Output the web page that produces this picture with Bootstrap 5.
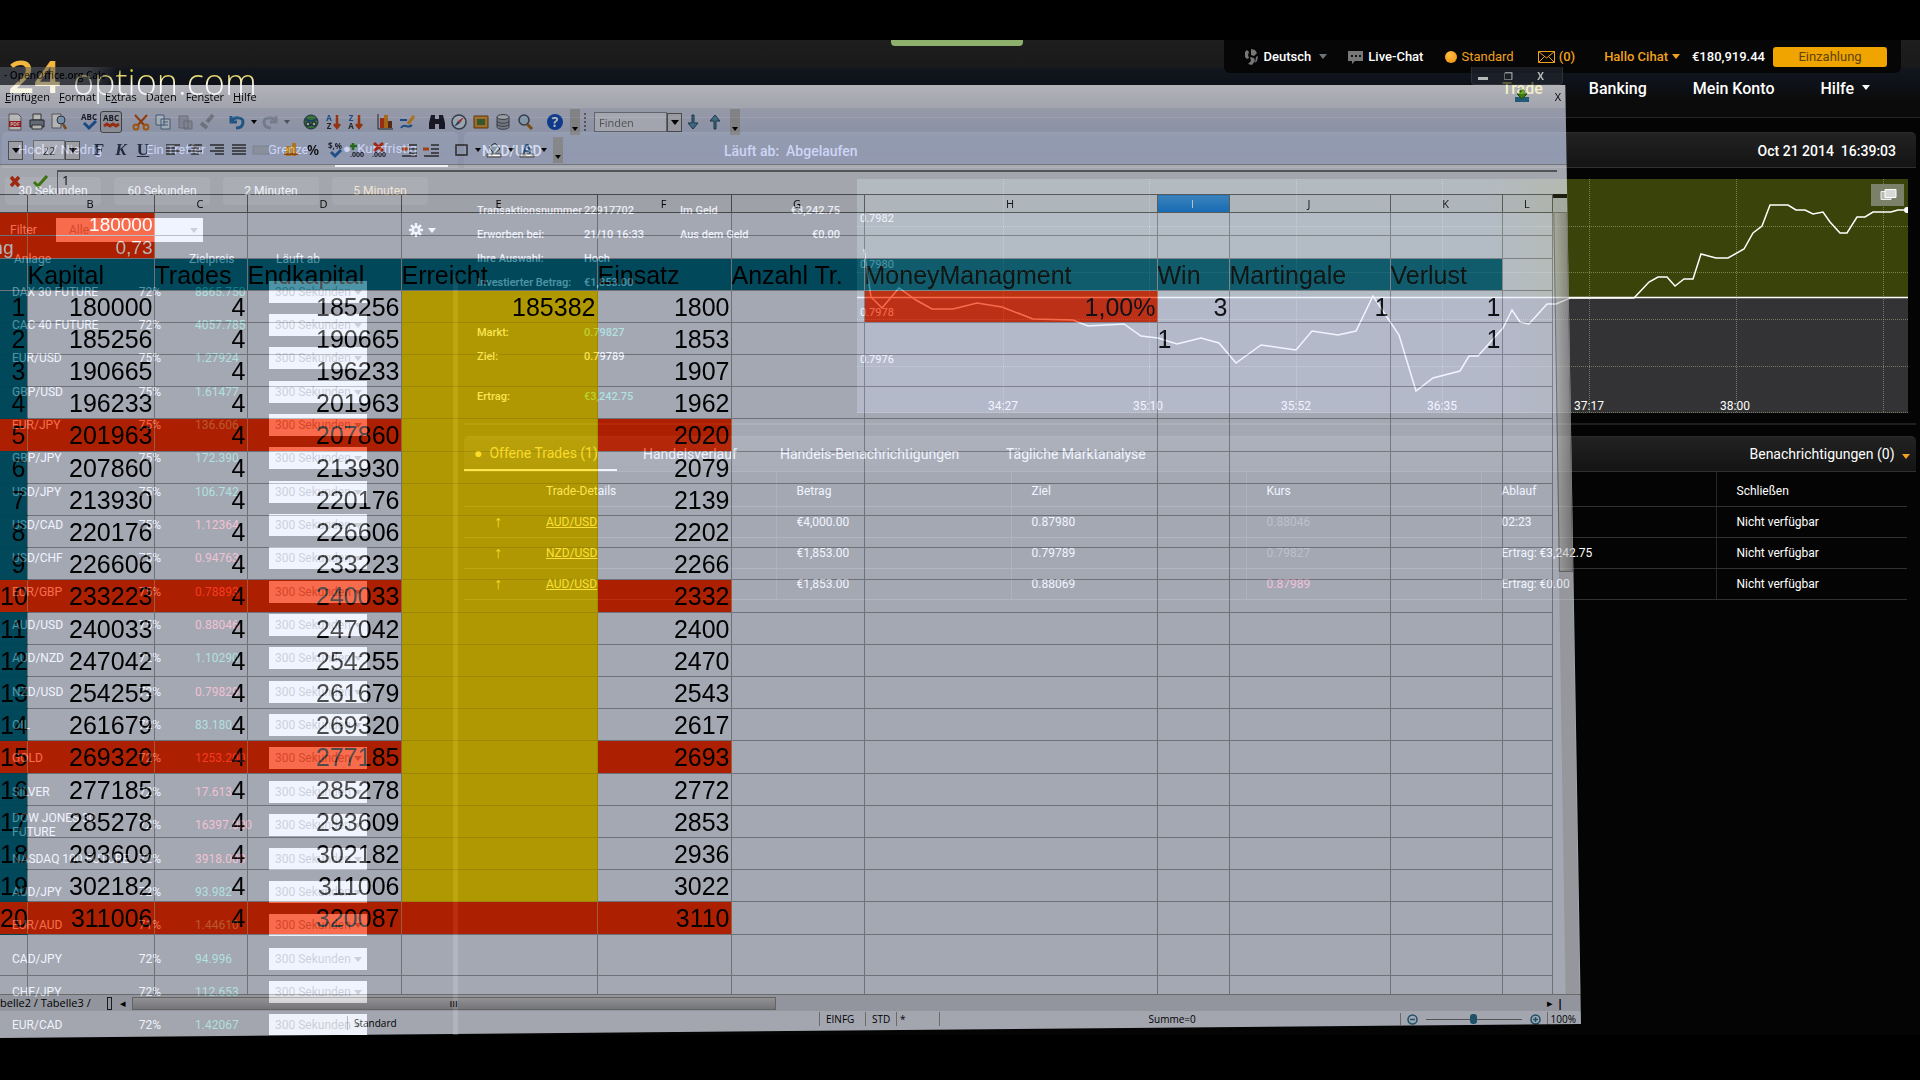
<!DOCTYPE html>
<html lang="de">
<head>
<meta charset="utf-8">
<meta name="viewport" content="width=device-width, initial-scale=1">
<title>24option.com</title>
<link href="https://cdn.jsdelivr.net/npm/bootstrap@5.3.0/dist/css/bootstrap.min.css" rel="stylesheet">
<style>
body{background:#000;color:#fff;font-family:Roboto,"Liberation Sans",sans-serif;font-size:12px;line-height:16px;overflow:hidden}
a{color:inherit;text-decoration:none}
.stage{height:100vh;padding-top:40px;padding-bottom:45px}
.platform{background:#040404}
.site-head{height:78px;background:linear-gradient(#1e1e1e,#1a1a1b 26px,#11151d 30px,#0e1118 44px,#0b0b0b 60px,#0a0a0a);border-bottom:1px solid #262626}
.green-tab{left:891px;top:0;width:132px;height:6px;background:#8db16c;border-radius:0 0 4px 4px}
.logo{font-family:"Open Sans","Noto Sans",sans-serif;padding-left:8px;line-height:56px}
.logo-num{font-size:46px;font-weight:600;background:linear-gradient(#f3b63e 40%,#fff3b0 66%);-webkit-background-clip:text;background-clip:text;color:transparent;width:65px;padding-bottom:8px}
.logo-name{font-size:36px;font-weight:300;background:linear-gradient(#d9c93c 40%,#fff 60%);-webkit-background-clip:text;background-clip:text;color:transparent;padding-top:6px}
.user-bar{height:33px;background:#060607;border-radius:0 0 6px 6px;margin-right:19px;padding:0 14px 0 18px;font-weight:500;font-size:13px}
.orange{color:#f0a11e}
.dot-ball{width:12px;height:12px;border-radius:50%;background:radial-gradient(circle at 40% 30%,#ffc040,#f08a10);margin-left:22px}
.pay-btn{height:20px;width:114px;line-height:18px;background:#f0a400;border:0;border-radius:3px;color:#5d4508;font-size:13px;padding:0}
.caret{width:0;height:0;border:4px solid transparent;border-top:5px solid currentColor;border-bottom:0;display:inline-block}
.main-nav{font-size:16px;font-weight:500;line-height:20px;padding:6px 50px 0 0;gap:46px}
.left-col{width:456px;flex:none;margin-left:2px}
.panel-head{height:36px;background:linear-gradient(#222,#141414);border-bottom:1px solid #303030;border-top:1px solid #2c2c2c;border-radius:5px 5px 0 0}
.ptab{font-size:13px;color:#dcdcff}
.time-btn{width:96px;height:28px;border:0;background:#1b1b1b;color:#fff;border-radius:4px;font-size:12px;padding:0}
.sel{appearance:none;border:0;border-radius:0;background-color:#fff;color:#888;font-size:12px;line-height:16px;padding:0 6px}
.sel-wrap{position:relative;display:inline-flex}
.sel-wrap::after{content:"";position:absolute;right:5px;top:50%;margin-top:-2px;border:4px solid transparent;border-top:5px solid #888;border-bottom:0;pointer-events:none}
.assets{min-height:0;overflow:hidden;padding-top:4px}
.asset-list{margin-bottom:-7px;border-right:5px solid #333}
.asset-row{flex:1 1 0;min-height:0;padding-left:10px;line-height:14px}
.a-name{width:108px}.a-pct{width:41px;text-align:right}.a-price{width:74px;margin-left:34px}
.up{color:#30c09a}.down{color:#ff5a70}
.info{width:400px;font-size:11px;font-weight:500;padding:24px 0 0 13px}
.info-line{height:24px;line-height:16px}
.gridl{stroke:#b8bf90;stroke-opacity:.5;stroke-dasharray:1 1}
.trades-t{color:#fff;width:100%;table-layout:fixed}
.trades-t th{font-weight:400;height:34px;vertical-align:middle;padding:5px 0 0 20px;border-bottom:1px solid #303030}
.trades-t td{height:31px;padding:0 0 0 20px;border-bottom:1px solid #303030}
.trades-t tr>:nth-child(n+3){border-left:1px solid #262626}
.trades-t a{text-decoration:underline;color:#ffeeb0}
.tabx{font-size:14px}

/* translucent spreadsheet window */
.calc{position:absolute;left:0;top:67px;bottom:42px;width:1581px;max-width:82.4%;opacity:.7;color:#000;font-family:"Open Sans","Noto Sans",sans-serif;font-size:10px;clip-path:polygon(0 0,calc(100% - 16px) 0,100% calc(100% - 14px),0 100%)}
.calc-title{height:18px;padding-right:18px}
.title-glow{padding:0 12px 0 4px;font-weight:600;background:linear-gradient(90deg,#5c5e64cc 75%,transparent)}
.win-btns{border:1px solid #3b3f48;border-top:0;border-radius:0 0 4px 4px;width:92px;height:18px;background:#22262f;padding:0 18px 0 6px}
.win-btns button,.tb{border:0;background:none;padding:0;color:inherit;line-height:14px}
.calc-menu{height:23px;background:linear-gradient(#fbfbff,#e4e7f6);padding:4px 16px 0 5px;gap:9px;font-size:11px}
.calc-tools{background:linear-gradient(#d3d7ea,#c4d0ef 30px,#c8d3f3);border-bottom:1px solid #a09fa8}
.tool-line{height:28px}
.tb{width:22px;height:22px;display:inline-flex;align-items:center;justify-content:center;flex:none}
.tb svg{width:18px;height:18px}
.tb-c{width:11px;flex:none;display:inline-flex;justify-content:center}
.tb-c .caret{border-width:4px 3px 0}
.sp{width:8px;flex:none}
.pressed{border:1px solid #555;border-radius:3px;background:#c4c8d6}
.endcap{width:10px;height:26px;background:#b7b7ba;display:flex;align-items:flex-end;justify-content:center;padding-bottom:4px;flex:none}
.boxed{border:1px solid #8a8d98;background:#e8ebf8;color:#333;font-size:11px;height:20px;border-radius:0;padding:0 4px}
.boxbtn{width:15px;height:19px;border:1px solid #666;background:#d7d9e2;display:inline-flex;align-items:center;justify-content:center;padding:0}
.letter{font-family:"Liberation Serif",serif;font-size:17px;font-weight:700;color:#26334f}
.formula{height:29px;background:#eaedf8;padding-top:5px}
.formula input{border:0;border-top:2px solid #77777c;border-left:1px solid #777;background:transparent;height:24px;font-size:13px;padding:0 4px 6px;margin-left:5px}
.sheet-zone{background:#eaefff;min-height:0;overflow:hidden}
.cells{table-layout:fixed;width:1553px;border-collapse:collapse;font-family:"Liberation Sans",Arial,sans-serif;font-size:25px;line-height:30px;flex:none}
.cells th,.cells td{border-right:1px solid #9da1ab;border-bottom:1px solid #9da1ab;padding:0 1px 0 0;text-align:right;font-weight:400;white-space:nowrap;overflow:hidden;height:32px}
.cells thead th{height:18px;font:11px/15px "Open Sans",sans-serif;text-align:center;background:#e2e5f1;border-top:1px solid #666;border-color:#666}
.cells thead th.picked{background:linear-gradient(#3d9df0,#0a7ce6);color:#fff}
.cells .small-row>*{height:23px;font-size:19px;line-height:21px;color:#fff}
.cells .title-row>*{background:#006680;text-align:left;padding:0}
.cells .title-row>:last-child{background:none}
.cells .red{background:#f52c00;border-right-color:#e0825a}
.cells .yel{background:#fad900;border-color:#e0c000}
.cells .num{background:#006680;border-bottom-color:#006078}
.cells .num.red{background:#f52c00}
.cells .redrow>*{height:33px}
.cells .tail>*{height:41px}
.cells .cutoff{padding-right:13px;direction:rtl}
.vscroll{width:14px;background:#d4d7e0;transform:skewX(.9deg);transform-origin:top;flex:none;border-top:4px solid #111;padding-top:14px}
.vthumb{height:46%;border:1px solid #888;background:linear-gradient(90deg,#d5d5d5,#a9a9ac);width:100%}
.tabs-line{height:17px;background:#d0d4e0;border-top:1px solid #999;font-size:11px;line-height:14px}
.hthumb{width:644px;height:13px;border:1px solid #8d8d8d;background:linear-gradient(#d0d0d4,#a5a6aa)}
.status{height:27px;background:#e8ecfa;padding:0 5px 11px 0;font-size:10px}
.status .seg{border-left:1px solid #999;padding:0 6px;line-height:14px}
.status .low{margin:8px 0 0 347px;width:472px}
.zoomer{width:96px;height:12px;appearance:none;background:linear-gradient(#777,#777) center/100% 1px no-repeat}
.zoomer::-webkit-slider-thumb{appearance:none;width:7px;height:10px;border-radius:3px;background:#2b7394}
</style>
<script src="https://cdn.jsdelivr.net/npm/bootstrap@5.3.0/dist/js/bootstrap.bundle.min.js"></script>
</head>
<body>
<div class="stage position-relative">
<div class="platform d-flex flex-column h-100">
  <header class="site-head d-flex justify-content-between position-relative flex-shrink-0">
    <div class="green-tab position-absolute"></div>
    <a href="#" class="logo d-flex align-items-center"><span class="logo-num">24</span><span class="logo-name">option.com</span></a>
    <div class="d-flex flex-column align-items-end">
      <div class="user-bar d-flex align-items-center">
        <svg width="18" height="18" viewBox="0 0 18 18" fill="#777"><path d="M3 4l2-2 2 2-1 3 1 3-2 1-2-2zM9 1l4 1 2 3-3 3-3-1zM8 9l4 1 1 3-3 4-4-1 3-3zM14 9l2-1-1 5-2 2z"/></svg>
        <a href="#" class="ms-1">Deutsch</a><span class="caret text-secondary ms-2"></span>
        <svg style="margin-left:20px" width="17" height="16" viewBox="0 0 17 16"><path fill="#777" d="M1 2h15v10H8l-3 3v-3H1z"/><path fill="#111" d="M4 6h2v2H4zM8 6h2v2H8zM12 6h2v2h-2z"/></svg>
        <a href="#" class="ms-1">Live-Chat</a>
        <span class="dot-ball"></span><span class="orange ms-1 fw-normal">Standard</span>
        <svg class="ms-4" width="17" height="12" viewBox="0 0 17 12" fill="none" stroke="#f0a11e"><path d="M.5.5h16v11H.5zL8.500 7l8-6.500M.5 11.500l6-6M16.500 11.500l-6-6"/></svg>
        <a href="#" class="orange ms-1">(0)</a>
        <a href="#" class="orange" style="margin-left:29px">Hallo Cihat</a><span class="caret orange ms-1"></span>
        <span style="margin-left:12px">€180,919.44</span>
        <button class="pay-btn ms-2">Einzahlung</button>
      </div>
      <nav class="main-nav d-flex">
        <a href="#" style="color:#e7dc50">Trade</a><a href="#">Banking</a><a href="#">Mein Konto</a><a href="#">Hilfe <span class="caret ms-1 mb-1"></span></a>
      </nav>
    </div>
  </header>
  <div class="d-flex flex-grow-1" style="min-height:0;padding-top:14px">
    <aside class="left-col d-flex flex-column">
      <nav class="panel-head d-flex align-items-center ptab ps-3 flex-shrink-0">
        <a href="#" style="width:128px">Hoch / Niedrig</a><a href="#" style="width:122px">Ein Treffer</a><a href="#" style="width:67px">Grenze</a>
        <a href="#" class="d-flex align-items-center h-100 ps-2" style="border-bottom:2px solid #fff;width:113px">●&nbsp; Kurzfristig</a>
      </nav>
      <div class="d-flex flex-shrink-0" style="gap:13px;margin:9px 0 0 3px">
        <button class="time-btn">30 Sekunden</button><button class="time-btn">60 Sekunden</button><button class="time-btn">2 Minuten</button><button class="time-btn" style="color:#ffd27a">5 Minuten</button>
      </div>
      <div class="d-flex align-items-center flex-shrink-0" style="margin:13px 0 0 8px">
        <label for="flt" style="width:46px">Filter</label>
        <span class="sel-wrap"><select id="flt" class="sel" style="width:147px;height:24px;padding-left:13px"><option>Alle</option></select></span>
        <svg style="margin-left:205px" width="16" height="16" viewBox="0 0 17 17"><g stroke="#fff" stroke-width="2.600"><path d="M8.500 1v15M1 8.500h15M3.200 3.200l10.600 10.600M13.800 3.200L3.200 13.800"/></g><circle cx="8.500" cy="8.500" r="4.500" fill="#fff"/><circle cx="8.500" cy="8.500" r="2" fill="#222"/></svg><span class="caret ms-1"></span>
      </div>
      <div class="d-flex flex-shrink-0" style="padding:9px 0 0 12px;height:29px"><span style="width:175px">Anlage</span><span style="width:87px">Zielpreis</span><span>Läuft ab</span></div>
      <div class="assets flex-grow-1 d-flex flex-column"><div class="asset-list flex-grow-1 d-flex flex-column" id="assets"></div></div>
    </aside>
    <main class="flex-grow-1 d-flex flex-column pe-1" style="margin-left:6px;min-width:0">
      <div class="panel-head d-flex align-items-center flex-shrink-0" style="font-size:14px;font-weight:500;padding:2px 20px 0 18px">
        <span style="width:242px">NZD/USD</span><span style="color:#dcdcff">Läuft ab: &nbsp;Abgelaufen</span><span class="ms-auto">Oct 21 2014 &nbsp;16:39:03</span>
      </div>
      <section class="d-flex flex-shrink-0" style="border-bottom:2px solid #1e1e1e;padding:11px 8px 10px 0;height:257px">
        <div class="info flex-shrink-0" id="info"></div>
        <svg class="flex-grow-1" style="min-width:0;margin-left:-7px" viewBox="857 179 1051 234" preserveAspectRatio="xMaxYMin slice" font-family="Roboto" font-size="11" fill="#fff">
          <defs><linearGradient id="sky"><stop offset=".6" stop-color="#37463f"/><stop offset=".68" stop-color="#3a430a"/></linearGradient><linearGradient id="floor"><stop offset=".6" stop-color="#3a3e52"/><stop offset=".68" stop-color="#333335"/></linearGradient></defs>
          <path fill="url(#sky)" d="M857 179h1051v118H857z"/><path fill="url(#floor)" d="M857 297h1051v116H857z"/>
          <path class="gridl" fill="none" d="M857 226.500h1051M857 272.500h1051M857 319.500h1051M857 366.500h1051M857 412.500h1051M1003.500 179v234M1149.500 179v234M1296.500 179v234M1442.500 179v234M1589.500 179v234M1736.500 179v234M1883.500 179v234"/>
          <path stroke="#fff" stroke-width="1.500" d="M857 297.500h1051"/>
          <path fill="none" stroke="#fff" stroke-width="1.500" d="M864 249L871 297L882 308L899 288L916 300L932 309H953L977 303L1002 307L1033 319L1073 320L1088 326L1124 324L1141 336L1158 338L1177 344L1201 338L1219 343L1236 363L1261 345L1296 350L1312 331L1338 335L1356 331L1373 296L1399 335L1416 391L1433 378L1460 371L1469 356H1478L1494 338L1503 328L1512 310L1520 322L1529 324L1547 304H1556L1570 298H1634L1649 282L1658 277H1667L1675 286L1684 279H1693L1701 254L1716 258H1728L1744 249L1753 233L1762 226L1770 205H1788L1796 210H1805L1813 214L1823 212L1830 222L1840 233H1847L1857 217H1865L1873 212H1891L1898 210H1908"/>
          <circle cx="1907" cy="210" r="3"/>
          <text x="860" y="222">0.7982</text><text x="860" y="268">0.7980</text><text x="860" y="316">0.7978</text><text x="860" y="363">0.7976</text>
          <g text-anchor="middle" font-size="12"><text x="1003" y="410">34:27</text><text x="1148" y="410">35:10</text><text x="1296" y="410">35:52</text><text x="1442" y="410">36:35</text><text x="1589" y="410">37:17</text><text x="1735" y="410">38:00</text></g>
          <path fill="#7a8168" d="M1871 184h33v22h-33z"/><path fill="#b9b9b4" stroke="#eee" d="M1881 191.500h10v8h-10z"/><path fill="#d8d8d6" stroke="#fff" d="M1885 189.500h11v8h-11z"/>
        </svg>
      </section>
      <nav class="panel-head d-flex align-items-center tabx flex-shrink-0" style="margin-top:11px;padding-right:6px">
        <a href="#" class="d-flex align-items-center h-100" style="width:153px;padding-left:10px;color:#ffe28a;border-bottom:2px solid #fff">●&nbsp; Offene Trades (1)</a>
        <a href="#" style="margin-left:26px;width:137px">Handelsverlauf</a><a href="#" style="width:226px">Handels-Benachrichtigungen</a><a href="#">Tägliche Marktanalyse</a>
        <a href="#" class="ms-auto">Benachrichtigungen (0) <span class="caret orange ms-1"></span></a>
      </nav>
      <div style="padding-right:9px"><table class="trades-t">
        <colgroup><col style="width:62px"><col style="width:250px"><col style="width:235px"><col style="width:235px"><col style="width:235px"><col style="width:235px"><col></colgroup>
        <thead><tr><th></th><th>Trade-Details</th><th>Betrag</th><th>Ziel</th><th>Kurs</th><th>Ablauf</th><th>Schließen</th></tr></thead>
        <tbody id="trades"></tbody>
      </table></div>
    </main>
  </div>
</div>

<div class="calc d-flex flex-column">
  <div class="calc-title d-flex justify-content-between flex-shrink-0"><span class="title-glow">- OpenOffice.org Calc</span>
    <div class="win-btns d-flex justify-content-between align-items-center text-white"><button>▬</button><button>❐</button><button class="fw-bold ms-2">X</button></div></div>
  <div class="calc-menu d-flex flex-shrink-0"><a href="#"><u>E</u>infügen</a><a href="#"><u>F</u>ormat</a><a href="#">E<u>x</u>tras</a><a href="#">Da<u>t</u>en</a><a href="#">Fen<u>s</u>ter</a><a href="#"><u>H</u>ilfe</a>
    <svg class="ms-auto" width="16" height="14" viewBox="0 0 16 14"><path fill="#2d7ba6" d="M1 8h14v5H1z"/><path fill="#4fae18" stroke="#246b00" d="M6 1h4v4h3l-5 5-5-5h3z"/></svg><span class="ms-3 me-1">X</span></div>
  <div class="calc-tools flex-shrink-0">
    <div class="tool-line d-flex align-items-center ps-1" id="tools1"></div>
    <div class="tool-line d-flex align-items-center" id="tools2"></div>
  </div>
  <div class="formula d-flex flex-shrink-0">
    <button class="tb ms-1" aria-label="Abbrechen"><svg viewBox="0 0 18 18"><path stroke="#d8300c" stroke-width="3.500" d="M5 5l8 9M13 5l-8 9"/></svg></button>
    <button class="tb ms-1" aria-label="Übernehmen"><svg viewBox="0 0 18 18"><path fill="none" stroke="#4d9a10" stroke-width="3" d="M2 10l4 4L15 4"/></svg></button>
    <input class="flex-grow-1 me-4" value="1" aria-label="Eingabezeile">
  </div>
  <div class="sheet-zone d-flex flex-grow-1">
    <table class="cells"><colgroup><col style="width:27px"><col style="width:127px"><col style="width:93px"><col style="width:154px"><col style="width:196px"><col style="width:134px"><col style="width:133px"><col style="width:293px"><col style="width:72px"><col style="width:161px"><col style="width:112px"><col></colgroup>
      <thead><tr><th></th><th>B</th><th>C</th><th>D</th><th>E</th><th>F</th><th>G</th><th>H</th><th class="picked">I</th><th>J</th><th>K</th><th>L</th></tr></thead>
      <tbody id="cells"></tbody></table>
    <div class="vscroll"><div class="vthumb"></div></div>
  </div>
  <div class="tabs-line d-flex align-items-center flex-shrink-0"><a href="#">belle2</a>&nbsp;/&nbsp;<a href="#">Tabelle3</a>&nbsp;/<span class="ms-3 border border-dark" style="width:5px;height:13px"></span><span style="margin:0 6px 0 8px">◂</span><div class="hthumb text-center" style="line-height:9px">ııı</div><span class="ms-auto" style="padding-right:18px">▸<b class="ms-1">|</b></span></div>
  <div class="status d-flex align-items-center flex-shrink-0">
    <span class="seg low">Standard</span><span class="seg" style="width:46px">EINFG</span><span class="seg" style="width:31px">STD</span><span class="seg" style="width:14px;padding-left:3px">*</span><span class="seg"></span><span class="seg ms-3">&nbsp;</span>
    <span style="margin-left:194px">Summe=0</span>
    <span class="seg ms-auto d-flex align-items-center gap-2"><svg width="11" height="11" viewBox="0 0 11 11" fill="none" stroke="#2b7394" stroke-width="1.500"><circle cx="5.500" cy="5.500" r="4.500"/><path d="M3 5.500h5"/></svg><input type="range" class="zoomer" aria-label="Maßstab"><svg width="11" height="11" viewBox="0 0 11 11" fill="none" stroke="#2b7394" stroke-width="1.500"><circle cx="5.500" cy="5.500" r="4.500"/><path d="M3 5.500h5M5.500 3v5"/></svg></span><span class="seg" style="padding:0 0 0 3px">100%</span>
  </div>
</div>
</div>
<script>
const el = id => document.getElementById(id);

// asset list
const assets = [['DAX 30 FUTURE',72,'8865.750','up'],['CAC 40 FUTURE',72,'4057.785','up'],['EUR/USD',75,'1.27924','up'],['GBP/USD',75,'1.61477','up'],['EUR/JPY',75,'136.606','up'],['GBP/JPY',75,'172.390','up'],['USD/JPY',75,'106.742','up'],['USD/CAD',75,'1.12364','down'],['USD/CHF',75,'0.94763','down'],['EUR/GBP',75,'0.78893','down'],['AUD/USD',75,'0.88046','down'],['AUD/NZD',72,'1.10290','up'],['NZD/USD',72,'0.79829','down'],['OIL',72,'83.180','up'],['GOLD',72,'1253.200','down'],['SILVER',72,'17.613','down'],['DOW JONES 30 FUTURE',72,'16397.000','down'],['NASDAQ 100 FUTURE',72,'3918.000','down'],['AUD/JPY',72,'93.982','up'],['EUR/AUD',71,'1.44610','up'],['CAD/JPY',72,'94.996','up'],['CHF/JPY',72,'112.653','up'],['EUR/CAD',72,'1.42067','up']];
el('assets').innerHTML = assets.map(a => `<div class="asset-row d-flex align-items-center"><span class="a-name ${a[0].startsWith('NAS') ? 'text-nowrap' : ''}">${a[0]}</span><span class="a-pct">${a[1]}%</span><span class="a-price ${a[3]}">${a[2]}</span><span class="sel-wrap"><select class="sel" style="width:98px;height:22px" aria-label="Laufzeit ${a[0]}"><option>300 Sekunden</option></select></span></div>`).join('');

// trade information
const info = [['Transaktionsnummer','22917702','Im Geld','€3,242.75'],['Erworben bei:','21/10 16:33','Aus dem Geld','€0.00'],['Ihre Auswahl:','Hoch'],['Investierter Betrag:','€1,853.00'],[''],['Markt:','<span class="up">0.79827</span>'],['Ziel:','0.79789'],['',''],['Ertrag:','<span class="up">€3,242.75</span>']];
el('info').innerHTML = info.map((r, i) => `<div class="info-line d-flex" style="height:${i == 4 ? 26 : i == 7 ? 16 : 24}px"><span style="width:107px">${r[0]}</span><span style="width:96px">${r[1] || ''}</span><span style="width:90px">${r[2] || ''}</span><span class="text-end" style="width:70px">${r[3] || ''}</span></div>`).join('');

// open trades
el('trades').innerHTML = [['AUD/USD','€4,000.00','0.87980','0.88046','02:23','#555'],['NZD/USD','€1,853.00','0.79789','0.79827','Ertrag: €3,242.75','#555'],['AUD/USD','€1,853.00','0.88069','0.87989','Ertrag: €0.00','#ff5a90']].map(t => `<tr><td style="font-size:16px;padding-left:30px;color:#ffe28a">↑</td><td><a href="#">${t[0]}</a></td><td>${t[1]}</td><td>${t[2]}</td><td style="color:${t[5]}">${t[3]}</td><td class="text-nowrap">${t[4]}</td><td>Nicht verfügbar</td></tr>`).join('');

// spreadsheet cells
const kap = [180000,185256,190665,196233,201963,207860,213930,220176,226606,233223,240033,247042,254255,261679,269320,277185,285278,293609,302182,311006,320087];
const bet = [1800,1853,1907,1962,2020,2079,2139,2202,2266,2332,2400,2470,2543,2617,2693,2772,2853,2936,3022,3110];
const blank = n => '<td></td>'.repeat(n);
let rows = `<tr class="small-row"><td class="red"></td><td class="red">180000</td>${blank(10)}</tr><tr class="small-row"><td class="red cutoff">ng</td><td class="red">0,73</td>${blank(10)}</tr>`;
rows += '<tr class="title-row">' + ['','Kapital','Trades','Endkapital','Erreicht','Einsatz','Anzahl Tr.','MoneyManagment','Win','Martingale','Verlust',''].map(h => `<th>${h}</th>`).join('') + '</tr>';
bet.forEach((b, i) => {
  const n = i + 1, r = n % 5 == 0 ? 'red' : '';
  const tail = n == 1 ? '<td class="red">1,00%</td><td>3</td><td>1</td><td>1</td><td></td>' : n == 2 ? '<td></td><td class="text-start">1</td><td></td><td>1</td><td></td>' : blank(5);
  rows += `<tr class="${r ? 'redrow' : ''}"><th class="num ${r}">${n}</th><td class="${r}">${kap[i]}</td><td class="${r}">4</td><td class="${r}">${kap[n]}</td><td class="${n == 20 ? 'red' : 'yel'}">${n == 1 ? '185382' : ''}</td><td class="${r}">${b}</td><td></td>${tail}</tr>`;
});
rows += `<tr class="tail">${blank(12)}</tr><tr>${blank(12)}</tr>`;
el('cells').innerHTML = rows;

// toolbar icons, 18 x 18
const S = (body, name, cls = '') => `<button class="tb ${cls}" aria-label="${name}"><svg viewBox="0 0 18 18" fill="none">${body}</svg></button>`;
const G = '<span class="sp"></span>', C = '<span class="tb-c"><span class="caret"></span></span>';
const T = (s, y, c, z = 8) => `<text x="9" y="${y}" font-size="${z}" font-weight="700" text-anchor="middle" fill="${c}">${s}</text>`;
const lines = (a, b) => [4, 7, 10, 13].map((y, i) => `<path stroke="#333" stroke-width="1.500" d="M${i % 2 ? a : 2} ${y}H${i % 2 ? b : 16}"/>`).join('');
el('tools1').innerHTML = [
 S('<path fill="#fff" stroke="#777" d="M3 1h9l3 3v13H3z"/><path fill="#d22" d="M3 8h12v6H3z"/>' + T('PDF', 13, '#fff', 5), 'PDF'),
 S('<path fill="#fff" stroke="#444" d="M5 1h8v6H5z"/><path fill="#8a97a8" stroke="#333" d="M2 7h14v7H2z"/><path fill="#fff" stroke="#444" d="M4 12h10v4H4z"/>', 'Drucken'),
 S('<path fill="#fff" stroke="#777" d="M2 1h9v14H2z"/><circle cx="11" cy="7" r="4" fill="#a8cfee" stroke="#345"/><path stroke="#a86a20" stroke-width="2.500" d="M13 11l3 5"/>', 'Vorschau'), G,
 S(T('ABC', 7, '#223', 8) + '<path stroke="#2468b8" stroke-width="3" d="M4 10l5 5 7-7"/>', 'Rechtschreibung'),
 S(T('ABC', 8, '#223', 8) + '<path stroke="#d8401a" stroke-width="3" d="M2 13l3-2 3 2 3-2 3 2 3-2"/>', 'AutoPrüfung', 'pressed'), G,
 S('<path stroke="#c35010" stroke-width="2" d="M3 2l10 11M15 2L5 13"/><circle cx="4" cy="14" r="2.500" stroke="#e07810" stroke-width="2"/><circle cx="14" cy="14" r="2.500" stroke="#e07810" stroke-width="2"/>', 'Ausschneiden'),
 S('<path fill="#e8f2fc" stroke="#5c7fa8" d="M2 2h8v10H2zM7 6h9v10H7zM9 9h5M9 12h5"/>', 'Kopieren'),
 S('<path fill="#b4bccc" stroke="#9098a8" d="M3 3h9v12H3zM8 8h8v8H8z"/>', 'Einfügen'),
 S('<path stroke="#9aa2b2" stroke-width="4" d="M15 2L9 9M3 10l6 5"/>', 'Pinsel'), G,
 S('<path stroke="#2d78b8" stroke-width="3" d="M3 3v6h6M3 9c3-6 12-5 12 0s-4 6-7 6"/>', 'Rückgängig'), C,
 S('<path stroke="#a4b0c6" stroke-width="3" d="M15 3v6H9M15 9C12 3 3 4 3 9s4 6 7 6"/>', 'Wiederherstellen'), C.replace('caret"', 'caret text-secondary"'), G,
 S('<circle cx="9" cy="9" r="7" fill="#4d9a50" stroke="#245"/><path stroke="#245a88" stroke-width="2" d="M3 6q6 4 12 0M5 12h8"/><circle cx="6" cy="11" r="2" stroke="#222" fill="#cde"/><circle cx="12" cy="11" r="2" stroke="#222" fill="#cde"/>', 'Hyperlink'),
 S('<g transform="translate(-4 0)">' + T('A', 8, '#2468b8') + T('Z', 16, '#333') + '</g><path stroke="#d04a18" stroke-width="2.500" d="M13 2v12M10 11l3 4 3-4"/>', 'Aufsteigend'),
 S('<g transform="translate(-4 0)">' + T('Z', 8, '#2468b8') + T('A', 16, '#333') + '</g><path stroke="#d04a18" stroke-width="2.500" d="M13 2v12M10 11l3 4 3-4"/>', 'Absteigend'), G,
 S('<path fill="#d8401a" d="M4 5h4v10H4z"/><path fill="#e89020" d="M8 2h4v13H8z"/><path fill="#7a3a20" d="M12 8h4v7h-4z"/><path stroke="#333" d="M2 1v15h15"/>', 'Diagramm'),
 S('<path stroke="#e8a030" stroke-width="3" d="M16 3l-6 8"/><path stroke="#2468b8" stroke-width="2" d="M2 7h7M3 15c4-6 6 2 11-3"/>', 'Zeichnen'), G,
 S('<path fill="#223" d="M3 2h4v4h4V2h4l2 8v6h-6v-5H7v5H1v-6z"/>', 'Suchen'),
 S('<circle cx="9" cy="9" r="7" fill="#dce8f8" stroke="#456" stroke-width="1.500"/><path fill="#d33" d="M14 4l-4 6-2-2z"/><path fill="#258" d="M4 14l4-6 2 2z"/>', 'Navigator'),
 S('<path fill="#e09a38" stroke="#804a10" d="M2 3h14v12H2z"/><path fill="#4d7a40" d="M5 6h8v6H5z"/>', 'Gallery'),
 S('<path fill="#a8adb8" stroke="#556" d="M3 4v10c0 3 12 3 12 0V4"/><ellipse cx="9" cy="4" rx="6" ry="2.500" fill="#d4d8e0" stroke="#556"/><path stroke="#556" d="M3 8c0 3 12 3 12 0M3 11c0 3 12 3 12 0"/>', 'Datenquellen'),
 S('<circle cx="8" cy="7" r="5" fill="#b8d4ec" stroke="#456" stroke-width="1.500"/><path stroke="#a86a20" stroke-width="3" d="M11 11l5 5"/>', 'Zoom'), G,
 S('<circle cx="9" cy="9" r="8" fill="#1452c8"/>' + T('?', 14, '#fff', 14), 'Hilfe'),
 '<span class="endcap ms-1"><span class="caret" style="border-width:4px 3px 0"></span></span><span class="ms-1 me-2" style="border-left:2px dotted #777;height:18px"></span>',
 '<input class="boxed" style="width:73px" placeholder="Finden" aria-label="Finden"><button class="boxbtn" aria-label="Suchliste"><span class="caret"></span></button>',
 S('<path fill="#5a96b8" stroke="#234a68" d="M8 2h2v8h4l-5 6-5-6h4z"/>', 'Weitersuchen'), S('<path fill="#5a96b8" stroke="#234a68" d="M8 16h2V8h4L9 2 4 8h4z"/>', 'Rückwärts suchen'),
 '<span class="endcap ms-1"><span class="caret" style="border-width:4px 3px 0"></span></span>'].join('');
el('tools2').innerHTML = [
 '<button class="boxbtn" style="margin:0 10px 0 8px" aria-label="Schriftart"><span class="caret"></span></button><input class="boxed text-center" style="width:32px" value="22" aria-label="Schriftgröße"><button class="boxbtn me-2" aria-label="Größenliste"><span class="caret"></span></button>',
 '<button class="tb letter">F</button><button class="tb letter fst-italic">K</button><button class="tb letter text-decoration-underline">U</button>', G,
 S(lines(2, 11), 'Links'), S(lines(5, 13), 'Zentriert'), S(lines(7, 16), 'Rechts'), S(lines(2, 16), 'Blocksatz'), S('<path stroke="#a8b0c2" fill="#bcc4d4" d="M1 5h16v8H1z"/>', 'Verbinden'), G,
 S('<path fill="#e8a020" d="M4 5h5v10H4zM10 2h4v13h-4z"/><path stroke="#b85a10" stroke-width="2" d="M2 13h14"/>', 'Währung'),
 '<button class="tb" style="font-size:14px;font-weight:600">%</button>',
 S(T('$,%', 8, '#223', 8) + '<path stroke="#2468b8" stroke-width="3" d="M5 11l4 4 6-6"/>', 'Standardformat'),
 S('<path stroke="#2a8a20" stroke-width="2.500" d="M2 5h7M5 2v7"/>' + T('.000', 16, '#223', 7), 'Dezimalstelle hinzufügen'),
 S('<path stroke="#d22c10" stroke-width="3" d="M4 2l9 8M13 2l-9 8"/>' + T('.000', 16, '#223', 7), 'Dezimalstelle löschen'), G,
 S('<path stroke="#333" stroke-width="1.500" d="M9 4h8M9 8h8M9 12h8M2 15h15"/><path stroke="#d85018" stroke-width="3" d="M8 8H2"/>', 'Einzug vermindern'),
 S('<path stroke="#333" stroke-width="1.500" d="M9 4h8M9 8h8M9 12h8M2 15h15"/><path stroke="#d85018" stroke-width="3" d="M1 8h6"/>', 'Einzug erhöhen'), G,
 S('<path stroke="#333" stroke-width="1.500" d="M4 4h11v10H4z"/>', 'Umrandung'), C,
 S('<path fill="#bcd" stroke="#345" d="M4 6l6-4 5 6-6 5z"/><path fill="#fff" stroke="#555" d="M2 13h14v3H2z"/>', 'Hintergrundfarbe'), C,
 S('<text x="9" y="13" text-anchor="middle" font-size="14" font-weight="700" fill="#2a5a90">A</text><path fill="#fff" stroke="#555" d="M2 13h14v3H2z"/>', 'Rahmenfarbe'), C,
 '<span class="endcap ms-1"><span class="caret" style="border-width:4px 3px 0"></span></span>'].join('');
</script>
</body>
</html>
